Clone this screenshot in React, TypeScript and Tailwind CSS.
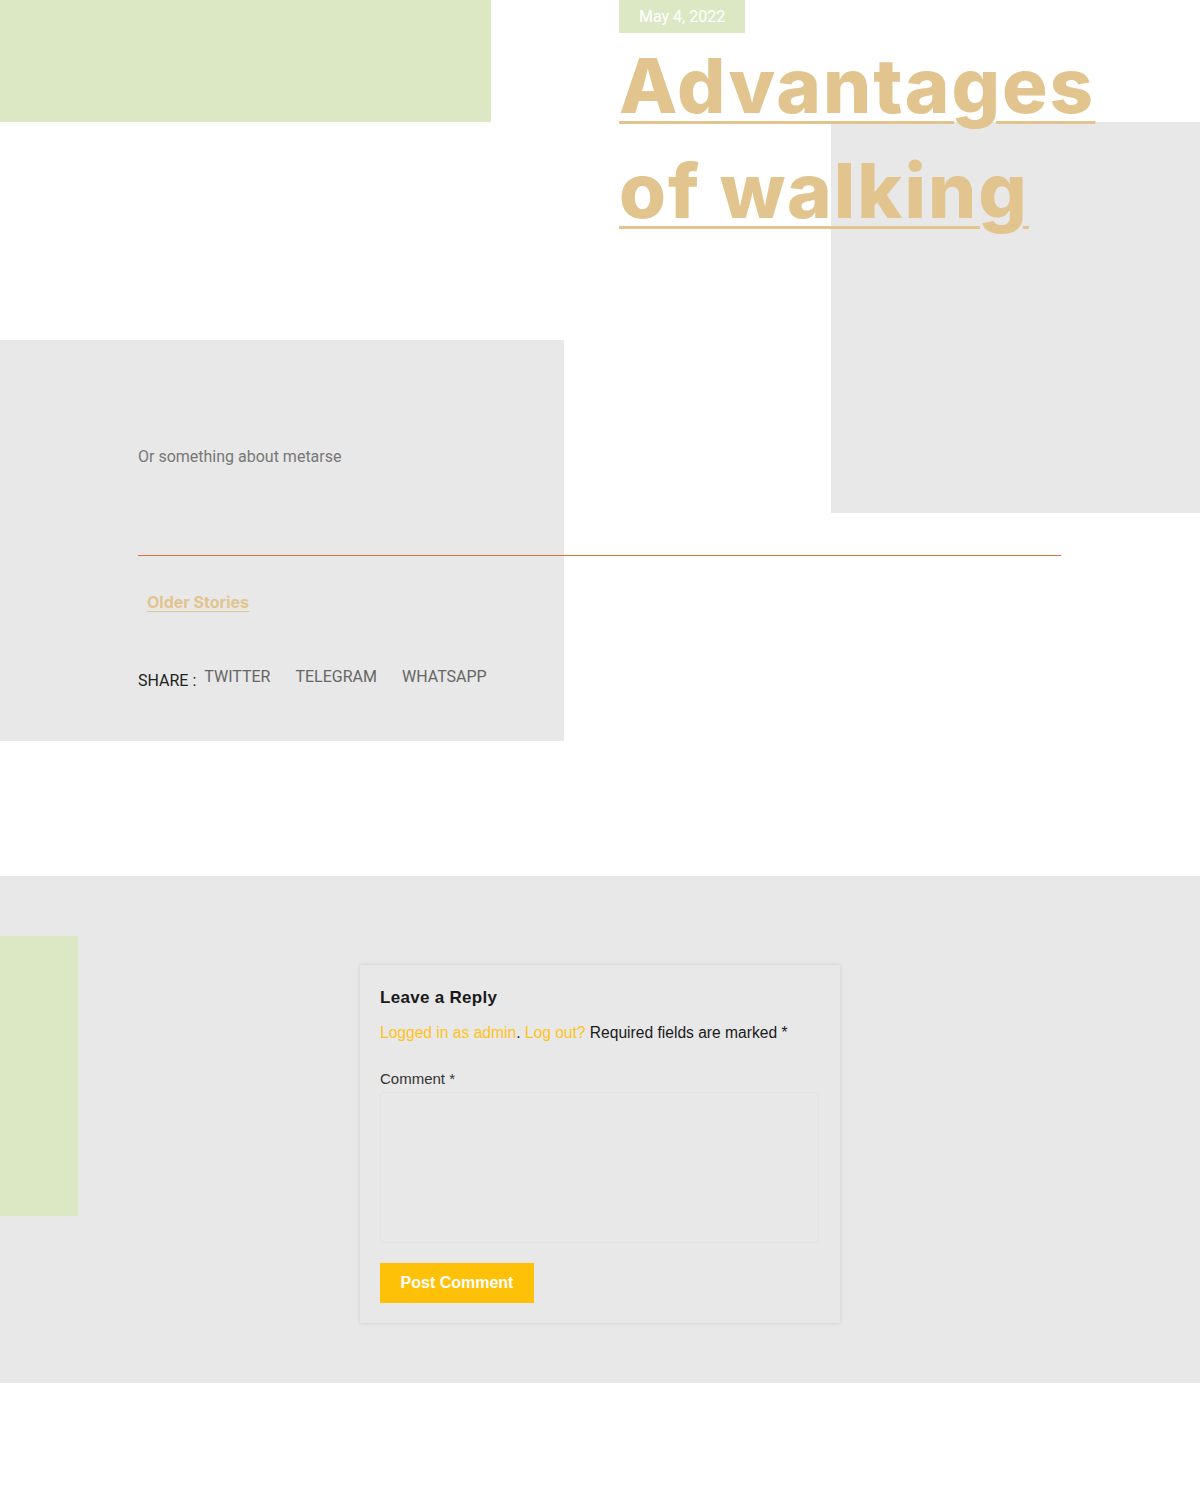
import React from "react";

export default function App() {
  return (
    <div className="relative w-[1200px] min-h-[1500px] bg-white overflow-hidden" style={{ fontFamily: "Roboto, Arial, sans-serif" }}>
      {/* decorative blocks */}
      <div className="absolute left-0 top-0 w-[491px] h-[122px] bg-[#dce8c4]" />
      <div className="absolute left-[831px] top-[122px] w-[369px] h-[391px] bg-[#e8e8e8]" />
      <div className="absolute left-0 top-[340px] w-[564px] h-[401px] bg-[#e8e8e8]" />

      <div className="relative h-[876px]">
        <div className="pl-[619px]">
          <div className="inline-block h-[33px] px-5 bg-[#dce8c4] text-white text-[16px] leading-[34px]">May 4, 2022</div>
          <h1
            className="text-[76px] leading-[105px] font-extrabold text-[#e2c48e] underline decoration-[3px] underline-offset-[8px] tracking-[2px]"
            style={{ fontFamily: "Inter, 'Noto Sans', sans-serif" }}
          >
            <a href="#">Advantages<br />of walking</a>
          </h1>
        </div>

        <div className="pl-[138px] pt-[204px]">
          <p className="text-[16px] leading-[20px] text-[#777]">Or something about metarse</p>
          <div className="mt-[88px] w-[923px] h-px bg-[#d8703f]" />
          <div className="pl-[9px] mt-[35px]">
            <a href="#" className="text-[16px] leading-[20px] font-bold text-[#e2c48e] underline underline-offset-[3px]" style={{ fontFamily: "Inter, 'Noto Sans', sans-serif" }}>
              Older Stories
            </a>
          </div>
          <div className="mt-[52px] flex items-start">
            <span className="text-[16px] leading-[20px] text-[#222] mt-[4px] mr-[8px]">SHARE :</span>
            <a href="#" className="text-[16px] leading-[20px] text-[#666] mr-[25px]">TWITTER</a>
            <a href="#" className="text-[16px] leading-[20px] text-[#666] mr-[25px]">TELEGRAM</a>
            <a href="#" className="text-[16px] leading-[20px] text-[#666]">WHATSAPP</a>
          </div>
        </div>
      </div>

      <div className="relative h-[507px] bg-[#e8e8e8] pt-[89px]">
        <div className="absolute left-0 top-[60px] w-[78px] h-[280px] bg-[#dce8c4]" />
        <div
          className="relative mx-auto w-[480px] h-[358px] bg-[#e8e8e8] shadow-[0_0_4px_rgba(0,0,0,0.12)] px-5 pt-[23px]"
          style={{ fontFamily: "'Liberation Sans', Arial, sans-serif" }}
        >
          <h3 className="text-[17px] leading-[20px] font-bold text-[#1a1a1a] tracking-[0.3px]">Leave a Reply</h3>
          <p className="mt-[15px] text-[15.6px] leading-[20px] text-[#1a1a1a]">
            <a href="#" className="text-[#ffc21a]">Logged in as admin</a>. <a href="#" className="text-[#ffc21a]">Log out?</a> Required fields are marked *
          </p>
          <label className="block mt-[26px] text-[15px] leading-[20px] text-[#333]">Comment *</label>
          <textarea className="block mt-[3px] w-[439px] h-[151px] border border-[#e2e2e2] rounded-[3px] bg-transparent resize-none outline-none" />
          <button className="mt-[20px] w-[154px] h-[40px] bg-[#ffc107] text-white text-[16px] font-bold">Post Comment</button>
        </div>
      </div>
    </div>
  );
}
